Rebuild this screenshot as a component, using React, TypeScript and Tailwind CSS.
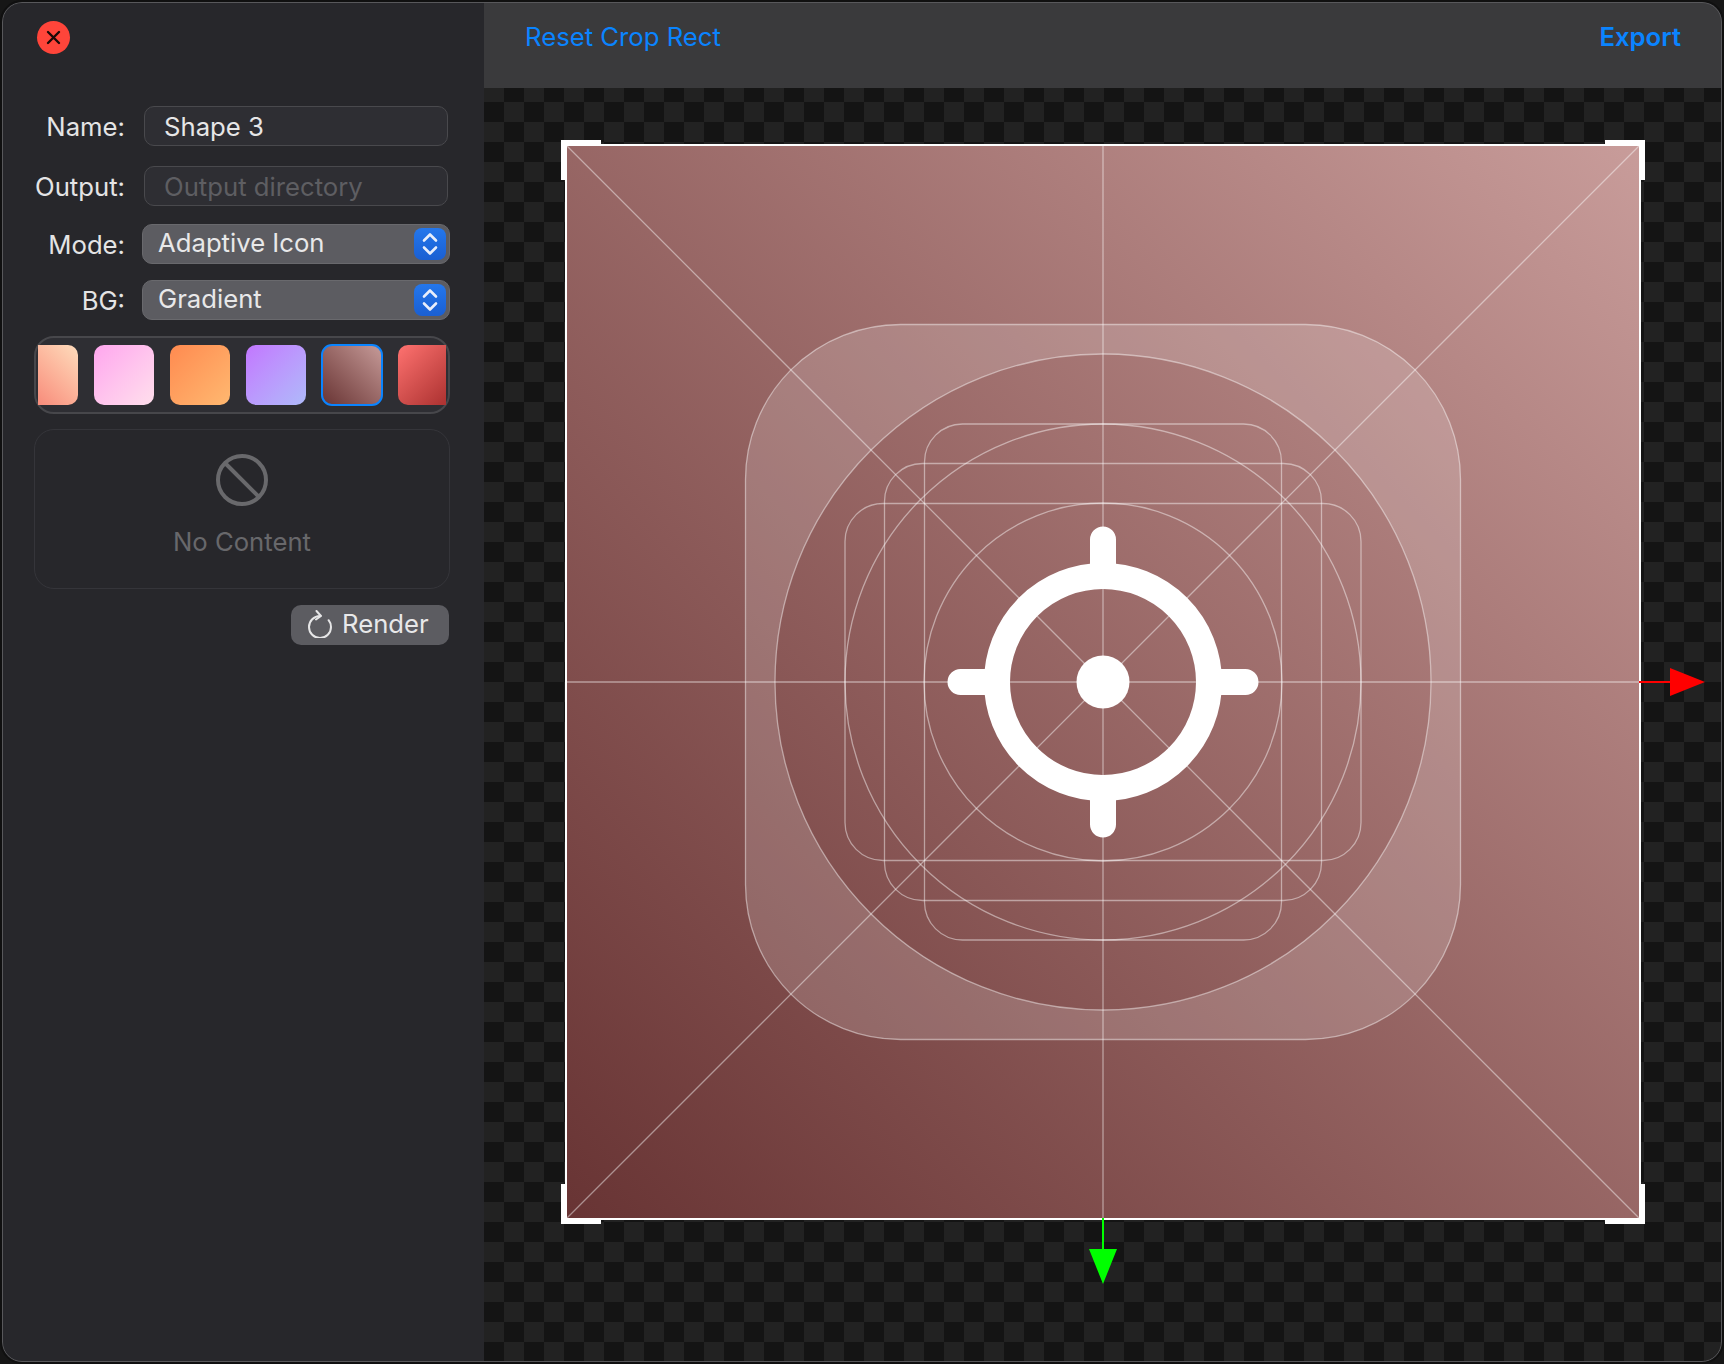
const font = { fontFamily: "Inter, 'Liberation Sans', sans-serif" };

const swatches = [
  { id: "peach", className: "bg-linear-to-tr from-[#f47a6e] to-[#fddcbc] -ml-[20px]" },
  { id: "pink", className: "bg-linear-to-br from-[#ffa6ee] to-[#ffdfec]" },
  { id: "orange", className: "bg-linear-to-br from-[#ff8a50] to-[#ffb870]" },
  { id: "violet", className: "bg-linear-to-br from-[#c276ff] to-[#aebafa]" },
  { id: "brown", className: "bg-linear-to-tr from-[#683434] to-[#c79c9a] outline-2 -outline-offset-1 outline-[#0a84ff]" },
  { id: "red", className: "bg-linear-to-br from-[#ff7270] to-[#a32a2a]" },
];

const Label = ({ text, className }: { text: string; className?: string }) => (
  <span className={`w-[91px] shrink-0 text-right text-[25.7px] leading-[30px] text-[#e4e4e5] ${className ?? ""}`}>
    {text}
  </span>
);

const TextField = ({ value, placeholder }: { value?: string; placeholder?: string }) => (
  <div className="ml-[19px] flex h-[40px] w-[304px] items-center rounded-[10px] border-[1.5px] border-[#49494d] bg-[#2e2e33] pl-[19px] pt-[2px] text-[25.7px] leading-[30px]">
    {value ? <span className="text-[#e6e6e7]">{value}</span> : <span className="text-[#5e5e62]">{placeholder}</span>}
  </div>
);

const Stepper = () => (
  <div className="flex h-[32px] w-[32px] items-center justify-center rounded-[8px] bg-linear-to-b from-[#2477ec] to-[#1a5fd2]">
    <svg width="20" height="28" viewBox="0 0 20 28" fill="none" stroke="#e8eefb" strokeWidth="2.6" strokeLinecap="round" strokeLinejoin="round">
      <path d="M4 10.5 10 4.5l6 6" />
      <path d="M4 17.5 10 23.5l6-6" />
    </svg>
  </div>
);

const Select = ({ value }: { value: string }) => (
  <div className="ml-[17px] flex h-[40px] w-[308px] items-center justify-between rounded-[10px] border-[1.5px] border-[#69696d] bg-[#5c5c61] pl-[15px] pr-[3px]">
    <span className="-mt-[2px] text-[25.7px] leading-[30px] text-[#e8e8e9]">{value}</span>
    <Stepper />
  </div>
);

const Sidebar = () => (
  <div className="flex w-[482px] shrink-0 flex-col bg-[#27272b] pl-[32px]" style={font}>
    <div className="ml-[3px] mt-[19px] flex h-[33px] w-[33px] items-center justify-center rounded-full bg-[#ff453a]">
      <svg width="15" height="15" viewBox="0 0 15 15" fill="none" stroke="#1a0a08" strokeWidth="2.4" strokeLinecap="round">
        <path d="M2 2 13 13M13 2 2 13" />
      </svg>
    </div>
    <div className="mt-[52px] flex items-center">
      <Label text="Name:" className="mt-[2px]" />
      <TextField value="Shape 3" />
    </div>
    <div className="mt-[20px] flex items-center">
      <Label text="Output:" className="mt-[2px]" />
      <TextField placeholder="Output directory" />
    </div>
    <div className="mt-[18px] flex items-center">
      <Label text="Mode:" className="mt-[2px]" />
      <Select value="Adaptive Icon" />
    </div>
    <div className="mt-[16px] flex items-center">
      <Label text="BG:" className="mt-[2px]" />
      <Select value="Gradient" />
    </div>

    {/* swatches, scrolled so the first and last are cut off */}
    <div className="mt-[16px] h-[78px] w-[416px] rounded-[20px] border-2 border-[#47474b] bg-[#2e2e33] px-[2px] py-[5px]">
      <div className="flex h-[64px] items-center gap-[16px] overflow-hidden">
        {swatches.map((s) => (
          <div key={s.id} className={`h-[60px] w-[60px] shrink-0 rounded-[10px] ${s.className}`} />
        ))}
      </div>
    </div>

    <div className="mt-[15px] flex h-[160px] w-[416px] flex-col items-center rounded-[20px] border-[1.5px] border-[#35353a]">
      <svg className="mt-[23px]" width="54" height="54" viewBox="0 0 54 54" fill="none" stroke="#69696c" strokeWidth="4">
        <circle cx="27" cy="27" r="24" />
        <path d="M10 10 44 44" />
      </svg>
      <span className="mt-[20px] text-[25.7px] leading-[30px] text-[#68686b]">No Content</span>
    </div>

    <div className="ml-[257px] mt-[16px] flex h-[40px] w-[158px] items-center rounded-[10px] bg-[#5c5c61] pl-[17px]">
      <svg className="-mt-[3px] -ml-[1px]" width="26" height="28" viewBox="0 0 26 28" fill="none" stroke="#e6e6e7" strokeWidth="2" strokeLinecap="round" strokeLinejoin="round">
        <path d="M13 6a11 11 0 1 0 11 11c0-2.600-.9-5-2.400-6.800" />
        <path d="M9.500 1 14 6l-5 3.500" />
      </svg>
      <span className="-mt-[2px] ml-[9px] text-[25.7px] leading-[30px] text-[#e8e8e9]">Render</span>
    </div>
  </div>
);

// icon-grid guides and the target glyph, all around the middle of the 1072 square
const IconGrid = () => (
  <svg className="absolute inset-0 overflow-visible" width="1072" height="1072" viewBox="0 0 1072 1072" fill="none">
    <path
      fillRule="evenodd"
      fill="#ffffff"
      fillOpacity="0.17"
      stroke="none"
      d="M333.500 178.500H738.500A155 155 0 0 1 893.500 333.500V738.500A155 155 0 0 1 738.500 893.500H333.500A155 155 0 0 1 178.500 738.500V333.500A155 155 0 0 1 333.500 178.500ZM536 208A328 328 0 1 0 536 864A328 328 0 1 0 536 208Z"
    />
    <g stroke="#ffffff" strokeOpacity="0.45" strokeWidth="1.300">
      <path d="M0 0 1072 1072M1072 0 0 1072M536 0V1072M0 536H1072" />
      <rect x="178.500" y="178.500" width="715" height="715" rx="155" />
      <circle cx="536" cy="536" r="328" />
      <circle cx="536" cy="536" r="258" />
      <circle cx="536" cy="536" r="179" />
      <rect x="357.500" y="278" width="357" height="516" rx="38" />
      <rect x="317.500" y="317.500" width="437" height="437" rx="38" />
      <rect x="278" y="357.500" width="516" height="357" rx="38" />
    </g>
    <g stroke="#ffffff" strokeWidth="26" strokeLinecap="round">
      <circle cx="536" cy="536" r="106" strokeWidth="26" />
      <path d="M536 393.500V430M536 678.500V642M393.500 536H430M678.500 536H642" />
    </g>
    <circle cx="536" cy="536" r="26.500" fill="#ffffff" />
    {/* axis arrows */}
    <path d="M1072 536H1104" stroke="#ff0000" strokeWidth="2" />
    <path d="M1103 522 1138 536 1103 550Z" fill="#ff0000" />
    <path d="M536 1072V1104" stroke="#00ff00" strokeWidth="2" />
    <path d="M522 1103 536 1138 550 1103Z" fill="#00ff00" />
  </svg>
);

const Handle = ({ className }: { className: string }) => <div className={`absolute bg-white ${className}`} />;

const Canvas = () => (
  <div className="flex-1 bg-[conic-gradient(#141414_25%,#222222_0_50%,#141414_0_75%,#222222_0)] bg-size-[40px_40px] bg-position-[0px_-6px] pl-[83px] pt-[58px]">
    <div className="relative h-[1072px] w-[1072px] bg-linear-to-tr from-[#683434] to-[#c89c9a] outline-2 outline-white">
      <IconGrid />
      <Handle className="-left-[6px] -top-[6px] h-[6px] w-[40px]" />
      <Handle className="-left-[6px] -top-[6px] h-[40px] w-[6px]" />
      <Handle className="-right-[6px] -top-[6px] h-[6px] w-[40px]" />
      <Handle className="-right-[6px] -top-[6px] h-[40px] w-[6px]" />
      <Handle className="-bottom-[6px] -left-[6px] h-[6px] w-[40px]" />
      <Handle className="-bottom-[6px] -left-[6px] h-[40px] w-[6px]" />
      <Handle className="-bottom-[6px] -right-[6px] h-[6px] w-[40px]" />
      <Handle className="-bottom-[6px] -right-[6px] h-[40px] w-[6px]" />
    </div>
  </div>
);

export default function App() {
  return (
    <div className="h-[1364px] w-[1724px] bg-[#161616]">
      <div className="relative flex h-full w-full overflow-hidden rounded-[22px] border-2 border-[#101010]">
        <Sidebar />
        <div className="flex min-w-0 flex-1 flex-col" style={font}>
          <div className="flex h-[86px] items-start justify-between bg-[#3a3a3c] pl-[41px] pr-[41px] pt-[20px] text-[25.7px] leading-[30px] text-[#0a84ff]">
            <span>Reset Crop Rect</span>
            <span className="font-semibold">Export</span>
          </div>
          <Canvas />
        </div>
        <div className="pointer-events-none absolute inset-0 rounded-[20px] border border-[#58585b]" />
      </div>
    </div>
  );
}
